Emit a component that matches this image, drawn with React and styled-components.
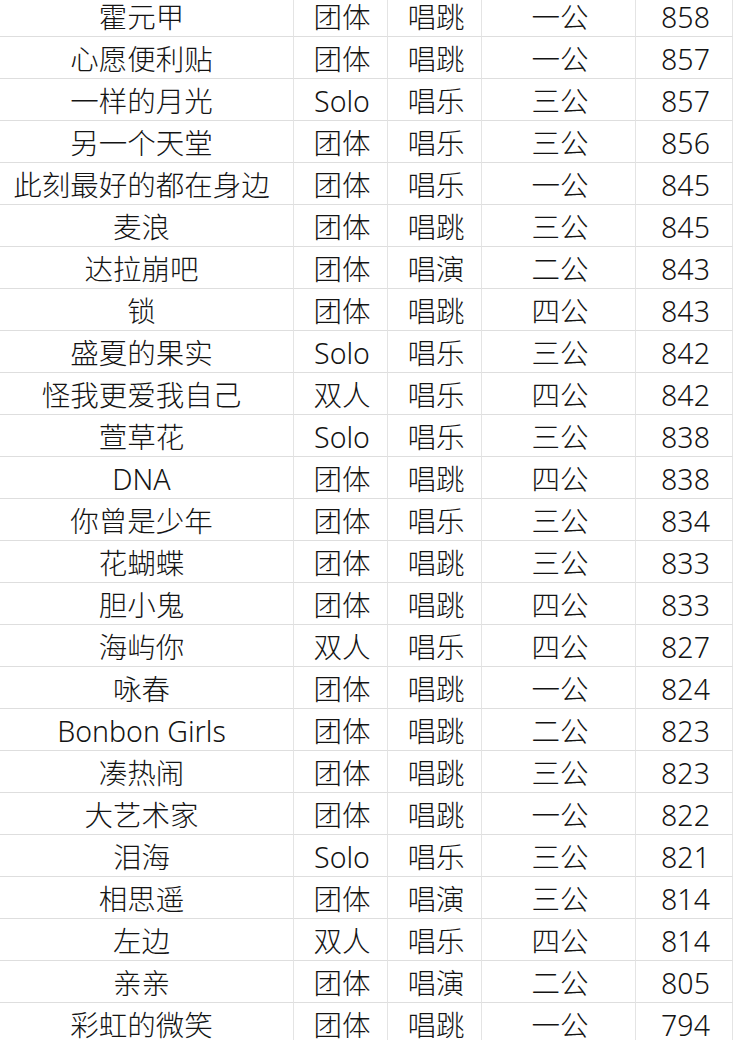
import React from 'react';
import styled, { createGlobalStyle } from 'styled-components';

const GlobalStyle = createGlobalStyle`
  html, body {
    margin: 0;
    padding: 0;
    background: #ffffff;
    overflow: hidden;
  }
`;

const rows = [
  ['霍元甲', '团体', '唱跳', '一公', '858'],
  ['心愿便利贴', '团体', '唱跳', '一公', '857'],
  ['一样的月光', 'Solo', '唱乐', '三公', '857'],
  ['另一个天堂', '团体', '唱乐', '三公', '856'],
  ['此刻最好的都在身边', '团体', '唱乐', '一公', '845'],
  ['麦浪', '团体', '唱跳', '三公', '845'],
  ['达拉崩吧', '团体', '唱演', '二公', '843'],
  ['锁', '团体', '唱跳', '四公', '843'],
  ['盛夏的果实', 'Solo', '唱乐', '三公', '842'],
  ['怪我更爱我自己', '双人', '唱乐', '四公', '842'],
  ['萱草花', 'Solo', '唱乐', '三公', '838'],
  ['DNA', '团体', '唱跳', '四公', '838'],
  ['你曾是少年', '团体', '唱乐', '三公', '834'],
  ['花蝴蝶', '团体', '唱跳', '三公', '833'],
  ['胆小鬼', '团体', '唱跳', '四公', '833'],
  ['海屿你', '双人', '唱乐', '四公', '827'],
  ['咏春', '团体', '唱跳', '一公', '824'],
  ['Bonbon Girls', '团体', '唱跳', '二公', '823'],
  ['凑热闹', '团体', '唱跳', '三公', '823'],
  ['大艺术家', '团体', '唱跳', '一公', '822'],
  ['泪海', 'Solo', '唱乐', '三公', '821'],
  ['相思遥', '团体', '唱演', '三公', '814'],
  ['左边', '双人', '唱乐', '四公', '814'],
  ['亲亲', '团体', '唱演', '二公', '805'],
  ['彩虹的微笑', '团体', '唱跳', '一公', '794'],
];

const Sheet = styled.div`
  margin-top: -5px;
  width: 733px;
  display: grid;
  grid-template-columns: 294px 94px 94px 154px 97px;
  font-family: "Noto Sans", "Noto Sans CJK SC", sans-serif;
  color: #141414;
`;

const Cell = styled.div`
  height: 42px;
  box-sizing: border-box;
  border-bottom: 1px solid #dedede;
  border-right: 1px solid #e4e4e4;
  display: flex;
  align-items: center;
  justify-content: center;
  padding-top: 3px;
  padding-right: ${p => (p.$first ? '10px' : '0')};
  padding-left: ${p => (p.$first ? '0' : '3px')};
  font-size: 28.5px;
  font-weight: 300;
  line-height: 1;
  white-space: nowrap;
`;

export default function App() {
  return (
    <>
      <GlobalStyle />
      <Sheet>
        {rows.map((r, i) =>
          r.map((v, j) => (
            <Cell key={`${i}-${j}`} $first={j === 0}>
              {v}
            </Cell>
          ))
        )}
      </Sheet>
    </>
  );
}
